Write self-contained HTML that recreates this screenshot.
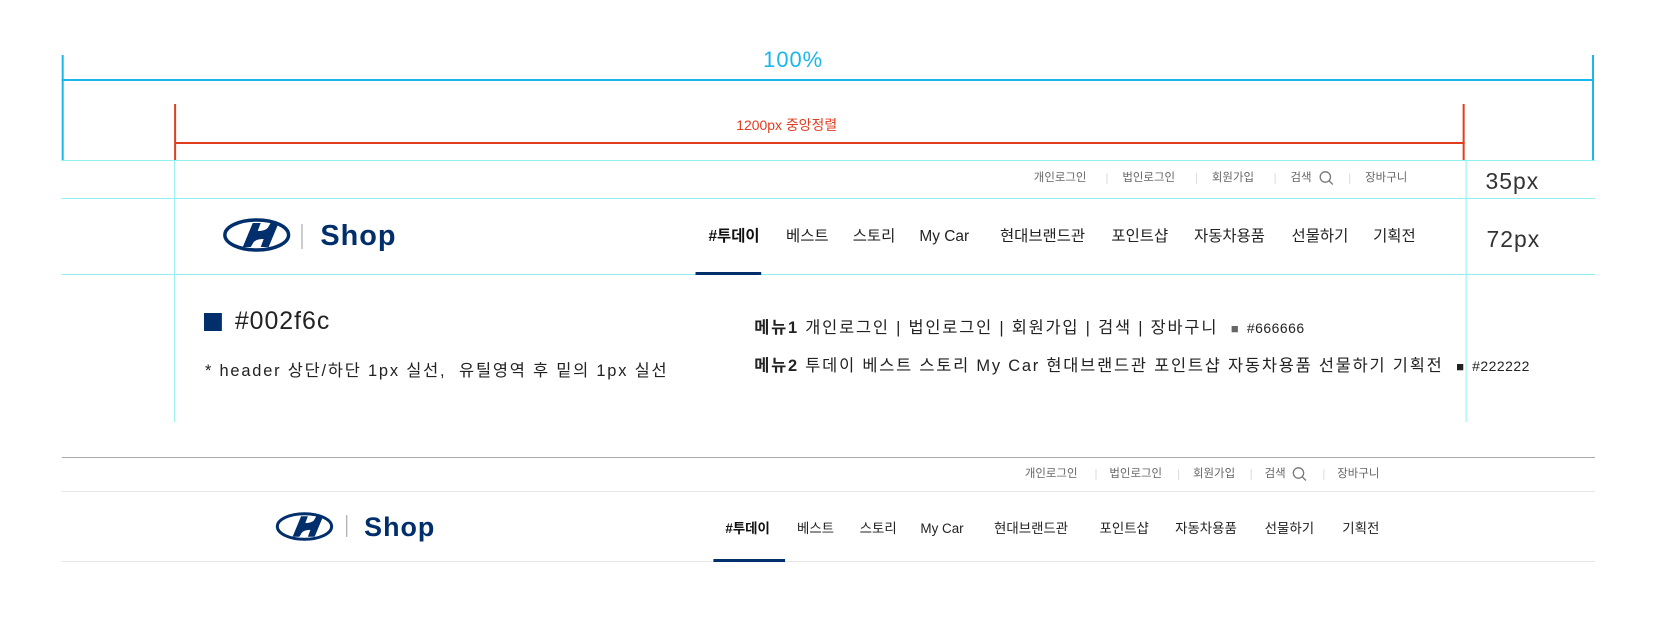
<!DOCTYPE html>
<html><head><meta charset="utf-8"><style>
*{margin:0;padding:0;box-sizing:border-box}
body{width:1657px;height:628px;background:#fff;position:relative;overflow:hidden;font-family:"Liberation Sans","Noto Sans CJK KR",sans-serif}
#w{position:absolute;left:0;top:0;width:1657px;height:628px;transform:scaleX(0.995);transform-origin:0 0}
.a{position:absolute;white-space:nowrap}
.ln{position:absolute}
.u{font-size:11.5px;color:#666;line-height:14px}
.n{font-size:15.5px;color:#222;line-height:18px}
.nb{font-size:13.5px;color:#222;line-height:16px}
.sep{position:absolute;width:1px;height:11px;background:#ddd}
.nt{font-size:16.5px;color:#222;letter-spacing:1.8px}
</style></head><body><div id="w">
<!-- guide lines -->
<div class="ln" style="left:62px;top:55px;width:2px;height:106px;background:#1ab7ea"></div>
<div class="ln" style="left:1600px;top:55px;width:2px;height:106px;background:#1ab7ea"></div>
<div class="ln" style="left:62px;top:79px;width:1540px;height:2px;background:#1ab7ea"></div>
<div class="a" style="left:767px;top:47px;font-size:22px;color:#1ab7ea;letter-spacing:1px">100%</div>
<div class="ln" style="left:175px;top:104px;width:2px;height:57px;background:#e03c1f"></div>
<div class="ln" style="left:1470px;top:104px;width:2px;height:57px;background:#e03c1f"></div>
<div class="ln" style="left:176px;top:142px;width:1296px;height:2px;background:#e03c1f"></div>
<div class="a" style="left:740px;top:115px;font-size:14px;color:#e03c1f">1200px 중앙정렬</div>
<div class="ln" style="left:62px;top:160px;width:1541px;height:1px;background:#8ef0f0"></div>
<div class="ln" style="left:62px;top:198px;width:1541px;height:1px;background:#8ef0f0"></div>
<div class="ln" style="left:62px;top:274px;width:1541px;height:1px;background:#8ef0f0"></div>
<div class="ln" style="left:175px;top:160px;width:1px;height:262px;background:#8ef0f0"></div>
<div class="ln" style="left:1473px;top:160px;width:1px;height:262px;background:#8ef0f0"></div>
<div class="a" style="left:1493px;top:168px;font-size:23px;color:#333;letter-spacing:1px">35px</div>
<div class="a" style="left:1494px;top:226px;font-size:23px;color:#333;letter-spacing:1px">72px</div>

<!-- top header util -->
<div class="a u" style="left:1039px;top:171px">개인로그인</div>
<div class="sep" style="left:1112px;top:173px"></div>
<div class="a u" style="left:1128px;top:171px">법인로그인</div>
<div class="sep" style="left:1202px;top:173px"></div>
<div class="a u" style="left:1218px;top:171px">회원가입</div>
<div class="sep" style="left:1281px;top:173px"></div>
<div class="a u" style="left:1297px;top:171px">검색</div>
<svg class="a" style="left:1325px;top:170px" width="16" height="16" viewBox="0 0 16 16"><circle cx="7" cy="7" r="5.2" fill="none" stroke="#777" stroke-width="1.3"/><line x1="10.8" y1="10.8" x2="14.5" y2="14.5" stroke="#777" stroke-width="1.3"/></svg>
<div class="sep" style="left:1356px;top:173px"></div>
<div class="a u" style="left:1372px;top:171px">장바구니</div>

<!-- top logo -->
<svg class="a" style="left:224px;top:218px" width="68" height="34" viewBox="0 0 68 34"><ellipse cx="34" cy="17" rx="32" ry="15" fill="none" stroke="#002f6c" stroke-width="3.5"/><path d="M20 29 L30 5 L38 5 L35 13 Q42 13 45 10 L48 5 L56 5 L46 29 L38 29 L41 21 Q34 21 31 24 L28 29 Z" fill="#002f6c"/></svg>
<div class="ln" style="left:303px;top:224px;width:1px;height:25px;background:#999"></div>
<div class="a" style="left:322px;top:220px;font-size:29px;font-weight:bold;color:#002f6c;letter-spacing:1px">Shop</div>

<!-- top nav -->
<div class="a n" style="left:712px;top:228px;font-weight:bold;color:#111">#투데이</div>
<div class="a n" style="left:790px;top:228px">베스트</div>
<div class="a n" style="left:857px;top:228px">스토리</div>
<div class="a n" style="left:924px;top:228px">My Car</div>
<div class="a n" style="left:1005px;top:228px">현대브랜드관</div>
<div class="a n" style="left:1117px;top:228px">포인트샵</div>
<div class="a n" style="left:1200px;top:228px">자동차용품</div>
<div class="a n" style="left:1298px;top:228px">선물하기</div>
<div class="a n" style="left:1380px;top:228px">기획전</div>
<div class="ln" style="left:699px;top:272px;width:66px;height:3px;background:#002f6c"></div>

<!-- notes -->
<div class="ln" style="left:205px;top:313px;width:18px;height:18px;background:#002f6c"></div>
<div class="a" style="left:236px;top:307px;font-size:25px;color:#222;letter-spacing:1px">#002f6c</div>
<div class="a nt" style="left:206px;top:357px">* header 상단/하단 1px 실선,&nbsp; 유틸영역 후 밑의 1px 실선</div>
<div class="a nt" style="left:758px;top:314px"><b>메뉴1</b> 개인로그인 | 법인로그인 | 회원가입 | 검색 | 장바구니 &nbsp;<span style="color:#666;font-size:13px">■</span> <span style="font-size:14px;letter-spacing:0.5px">#666666</span></div>
<div class="a nt" style="left:758px;top:352px"><b>메뉴2</b> 투데이 베스트 스토리 My Car 현대브랜드관 포인트샵 자동차용품 선물하기 기획전 &nbsp;<span style="color:#222;font-size:13px">■</span> <span style="font-size:14px;letter-spacing:0.5px">#222222</span></div>

<!-- bottom header -->
<div class="ln" style="left:62px;top:457px;width:1541px;height:1px;background:#aaa"></div>
<div class="ln" style="left:62px;top:491px;width:1541px;height:1px;background:#e6e6e6"></div>
<div class="ln" style="left:62px;top:561px;width:1541px;height:1px;background:#e6e6e6"></div>
<div class="a u" style="left:1030px;top:467px">개인로그인</div>
<div class="sep" style="left:1101px;top:469px"></div>
<div class="a u" style="left:1115px;top:467px">법인로그인</div>
<div class="sep" style="left:1184px;top:469px"></div>
<div class="a u" style="left:1199px;top:467px">회원가입</div>
<div class="sep" style="left:1257px;top:469px"></div>
<div class="a u" style="left:1271px;top:467px">검색</div>
<svg class="a" style="left:1298px;top:466px" width="16" height="16" viewBox="0 0 16 16"><circle cx="7" cy="7" r="5.2" fill="none" stroke="#777" stroke-width="1.3"/><line x1="10.8" y1="10.8" x2="14.5" y2="14.5" stroke="#777" stroke-width="1.3"/></svg>
<div class="sep" style="left:1330px;top:469px"></div>
<div class="a u" style="left:1344px;top:467px">장바구니</div>

<svg class="a" style="left:275px;top:512px" width="62" height="29" viewBox="0 0 68 34"><ellipse cx="34" cy="17" rx="32" ry="15" fill="none" stroke="#002f6c" stroke-width="3.5"/><path d="M20 29 L30 5 L38 5 L35 13 Q42 13 45 10 L48 5 L56 5 L46 29 L38 29 L41 21 Q34 21 31 24 L28 29 Z" fill="#002f6c"/></svg>
<div class="ln" style="left:348px;top:515px;width:1px;height:22px;background:#999"></div>
<div class="a" style="left:366px;top:512px;font-size:27px;font-weight:bold;color:#002f6c;letter-spacing:1px">Shop</div>

<div class="a nb" style="left:729px;top:521px;font-weight:bold;color:#111">#투데이</div>
<div class="a nb" style="left:801px;top:521px">베스트</div>
<div class="a nb" style="left:864px;top:521px">스토리</div>
<div class="a nb" style="left:925px;top:521px">My Car</div>
<div class="a nb" style="left:999px;top:521px">현대브랜드관</div>
<div class="a nb" style="left:1105px;top:521px">포인트샵</div>
<div class="a nb" style="left:1181px;top:521px">자동차용품</div>
<div class="a nb" style="left:1271px;top:521px">선물하기</div>
<div class="a nb" style="left:1349px;top:521px">기획전</div>
<div class="ln" style="left:717px;top:559px;width:72px;height:3px;background:#002f6c"></div>
</div></body></html>
